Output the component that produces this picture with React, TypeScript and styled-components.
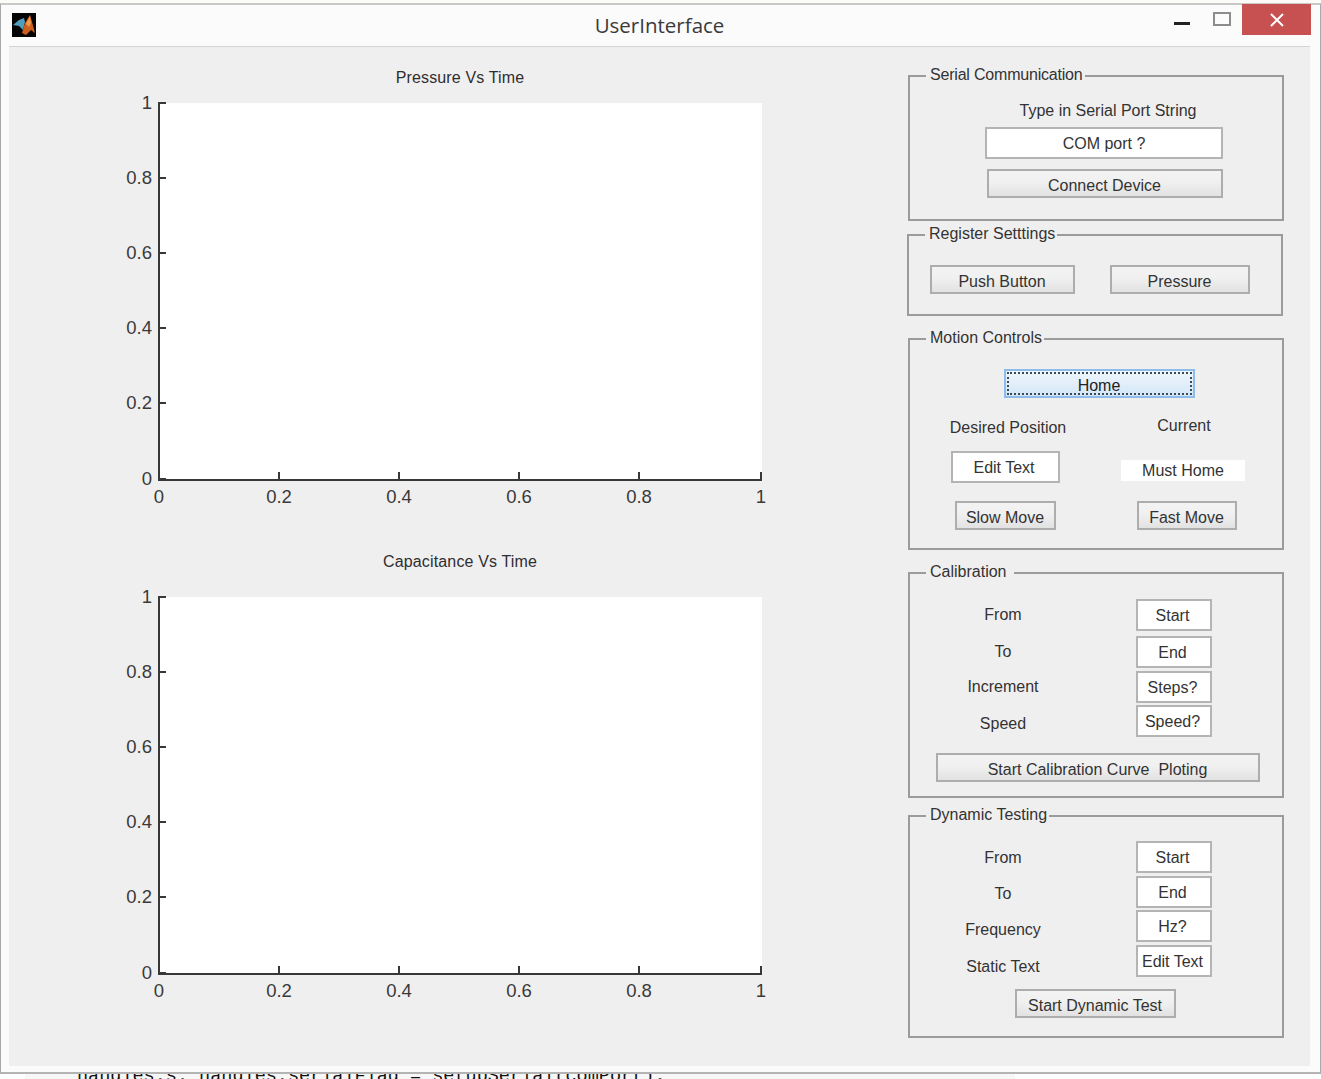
import React from "react";
import styled, { createGlobalStyle, css } from "styled-components";

const Global = createGlobalStyle`
  html, body { margin: 0; padding: 0; background: #ffffff; height: 1079px; overflow: hidden; }
  body { font-family: "Liberation Sans", Arial, sans-serif; }
  * { box-sizing: border-box; }
`;

type Place = { $top?: number; $left?: number; $w?: number; $h?: number };

const placed = css<Place>`
  margin-top: ${(p) => p.$top ?? 0}px;
  margin-left: ${(p) => p.$left ?? 0}px;
  ${(p) => (p.$w !== undefined ? `width: ${p.$w}px;` : "")}
  ${(p) => (p.$h !== undefined ? `height: ${p.$h}px;` : "")}
`;

const Page = styled.div`
  width: 1321px;
  height: 1079px;
  overflow: hidden;
`;

const TopGap = styled.div`
  height: 3px;
  background: #fdfbf8;
`;

const Window = styled.div`
  width: 1321px;
  height: 1071px;
  background: #fbfbfb;
  border: 1px solid #a9a9a9;
  border-top: 2px solid #c9c9c9;
  border-bottom: 2px solid #b4b4b4;
  display: flex;
  flex-direction: column;
`;

const TitleBar = styled.header`
  height: 41px;
  flex: none;
  display: flex;
  align-items: flex-start;
  position: relative;
  padding-left: 11px;
`;

const Logo = styled.svg`
  width: 24px;
  height: 24px;
  margin-top: 8px;
  display: block;
`;

const TitleText = styled.div`
  position: absolute;
  left: 0;
  right: 0;
  top: 6px;
  padding-right: 2px;
  text-align: center;
  font-family: "Open Sans", "Noto Sans", sans-serif;
  font-size: 20.5px;
  line-height: 28px;
  color: #3a3a3a;
`;

const WindowControls = styled.div`
  margin-left: auto;
  margin-right: 9px;
  display: flex;
  align-items: flex-start;
`;

const Minimize = styled.div`
  width: 16px;
  height: 3px;
  background: #222222;
  margin-top: 17px;
`;

const Maximize = styled.div`
  width: 18px;
  height: 14px;
  border: 2px solid #8c8c8c;
  margin-top: 7px;
  margin-left: 23px;
`;

const Close = styled.div`
  width: 69px;
  height: 31px;
  background: #c75050;
  margin-left: 11px;
  margin-top: -1px;
  display: flex;
  align-items: center;
  justify-content: center;
`;

const Client = styled.main`
  height: 1020px;
  width: 1301px;
  margin-left: 8px;
  flex: none;
  background: #f0eff0;
  border-top: 1px solid #d4d4d4;
  display: flex;
`;

const PlotColumn = styled.section`
  width: 899px;
  flex: none;
  padding-left: 91px;
  padding-top: 21px;
`;

const PlotTitle = styled.h2<{ $top?: number; $gap: number }>`
  margin: ${(p) => p.$top ?? 0}px 0 ${(p) => p.$gap}px;
  width: 720px;
  height: 20px;
  text-align: center;
  font-size: 16px;
  line-height: 20px;
  letter-spacing: 0.15px;
  font-weight: normal;
  color: #2e2e2e;
`;

const PlotSvg = styled.svg`
  display: block;
  width: 720px;
  height: 420px;
`;

const PanelColumn = styled.aside`
  width: 380px;
  flex: none;
  padding-top: 18px;
  display: flex;
  flex-direction: column;
`;

const Panel = styled.fieldset<{ $top?: number; $nudge?: number; $height: number }>`
  margin: ${(p) => p.$top ?? 0}px 0 0 ${(p) => p.$nudge ?? 0}px;
  padding: 0;
  width: 376px;
  height: ${(p) => p.$height}px;
  min-width: 0;
  border: 2px solid #9b9b9b;
`;

const PanelLegend = styled.legend<{ $tail?: number; $track?: number }>`
  margin-left: 16px;
  padding: 1px ${(p) => p.$tail ?? 2}px 3px 4px;
  font-size: 16px;
  line-height: 18px;
  letter-spacing: ${(p) => p.$track ?? 0}px;
  color: #333333;
`;

const Row = styled.div<{ $top?: number }>`
  display: flex;
  align-items: flex-start;
  margin-top: ${(p) => p.$top ?? 0}px;
`;

const Caption = styled.div<Place>`
  ${placed}
  flex: none;
  height: 20px;
  padding-top: 1px;
  line-height: 20px;
  font-size: 16px;
  text-align: center;
  white-space: pre;
  color: #333333;
`;

const EditBox = styled.div<Place & { $inset?: number }>`
  ${placed}
  flex: none;
  display: flex;
  align-items: center;
  justify-content: center;
  padding: 2px ${(p) => p.$inset ?? 3}px 0 0;
  background: #ffffff;
  border: 2px solid #b4b4b4;
  font-size: 16px;
  color: #333333;
`;

const ReadOut = styled.div<Place>`
  ${placed}
  flex: none;
  display: flex;
  align-items: center;
  justify-content: center;
  background: #ffffff;
  font-size: 16px;
  color: #333333;
`;

const PushButton = styled.div<Place>`
  ${placed}
  flex: none;
  display: flex;
  align-items: center;
  justify-content: center;
  padding: 4px 1px 0 0;
  background: linear-gradient(#f3f3f3, #f0f0f0 45%, #e2e2e2);
  border: 2px solid #adadad;
  font-size: 16px;
  white-space: pre;
  color: #333333;
`;

const FocusButton = styled(PushButton)`
  background: linear-gradient(#eef6fd, #e2effa 50%, #d2e6f7);
  border-color: #8dbce8;
  outline: 2px dotted #3d4a55;
  outline-offset: -5px;
  color: #222222;
`;

const CodeStrip = styled.div`
  height: 6px;
  margin-left: 25px;
  width: 990px;
  background: #f7f7f7;
  overflow: hidden;
  position: relative;
`;

const CodeLine = styled.pre`
  margin: -6px 0 0 52px;
  font-family: "Liberation Mono", monospace;
  font-size: 18.5px;
  line-height: 18px;
  color: #111111;
`;

const ticks = [0, 0.2, 0.4, 0.6, 0.8, 1];

function Plot() {
  const x0 = 59;
  const y0 = 13;
  const h = 376;
  const yb = y0 + h;
  // The reference's ticks fall on whole pixels: 120 apart across, 75 apart up.
  const xAt = (t: number) => (t === 1 ? x0 + 602 : x0 + Math.round(t * 600));
  const yAt = (t: number) => (t === 0 ? yb : yb - 1 - Math.round(t * 375));
  return (
    <PlotSvg viewBox="0 0 720 420">
      <rect x={x0} y={y0} width={603} height={h} fill="#ffffff" />
      <g stroke="#383838" strokeWidth="2" fill="none">
        <path d={`M${x0} ${y0 - 1}V${yb + 1}H${x0 + 603}`} />
        {ticks.map((t) => (
          <path key={`y${t}`} d={`M${x0} ${yAt(t)}h7`} />
        ))}
        {ticks.map((t) => (
          <path key={`x${t}`} d={`M${xAt(t)} ${yb}v-7`} />
        ))}
      </g>
      <g fontFamily="'Liberation Sans', Arial, sans-serif" fontSize="18.5" fill="#3a3a3a">
        {ticks.map((t) => (
          <text key={`yl${t}`} x={x0 - 7} y={yAt(t) + 6} textAnchor="end">
            {String(t)}
          </text>
        ))}
        {ticks.map((t) => (
          <text key={`xl${t}`} x={xAt(t)} y={yb + 24} textAnchor="middle">
            {String(t)}
          </text>
        ))}
      </g>
    </PlotSvg>
  );
}

function ParamRow({
  top,
  label,
  labelTop,
  value,
}: {
  top: number;
  label: string;
  labelTop: number;
  value: string;
}) {
  return (
    <Row $top={top}>
      <Caption $w={186} $top={labelTop}>
        {label}
      </Caption>
      <EditBox $left={40} $w={76} $h={32}>
        {value}
      </EditBox>
    </Row>
  );
}

export default function App() {
  return (
    <Page>
      <Global />
      <TopGap />
      <Window>
        <TitleBar>
          <Logo viewBox="0 0 24 24">
            <rect width="24" height="24" fill="#050505" />
            <path d="M1 12 L7 7 L12 5 L13 9 L11 17 L7 13 Z" fill="#4f9fbd" />
            <path d="M10 20 L13 10 L18 2 L20 9 L23 20 L19 17 L14 22 Z" fill="#cf5f1d" />
            <path d="M14 11 L18 3 L19 10 L17 14 Z" fill="#ee9a4a" />
          </Logo>
          <TitleText>UserInterface</TitleText>
          <WindowControls>
            <Minimize />
            <Maximize />
            <Close>
              <svg width="14" height="14" viewBox="0 0 14 14">
                <path d="M1 1L13 13M13 1L1 13" stroke="#ffffff" strokeWidth="2" fill="none" />
              </svg>
            </Close>
          </WindowControls>
        </TitleBar>
        <Client>
          <PlotColumn>
            <PlotTitle $gap={2}>Pressure Vs Time</PlotTitle>
            <Plot />
            <PlotTitle $top={42} $gap={12}>
              Capacitance Vs Time
            </PlotTitle>
            <Plot />
          </PlotColumn>
          <PanelColumn>
            <Panel $height={156}>
              <PanelLegend $track={-0.2}>Serial Communication</PanelLegend>
              <Caption $top={13} $left={48} $w={300}>
                Type in Serial Port String
              </Caption>
              <EditBox $top={7} $left={75} $w={238} $h={32} $inset={0}>
                COM port ?
              </EditBox>
              <PushButton $top={10} $left={77} $w={236} $h={29}>
                Connect Device
              </PushButton>
            </Panel>

            <Panel $top={3} $nudge={-1} $height={92}>
              <PanelLegend>Register Setttings</PanelLegend>
              <Row $top={19}>
                <PushButton $left={21} $w={145} $h={29}>
                  Push Button
                </PushButton>
                <PushButton $left={35} $w={140} $h={29}>
                  Pressure
                </PushButton>
              </Row>
            </Panel>

            <Panel $top={12} $height={222}>
              <PanelLegend>Motion Controls</PanelLegend>
              <FocusButton $top={19} $left={94} $w={191} $h={29}>
                Home
              </FocusButton>
              <Row $top={17}>
                <Caption $top={2} $w={196}>
                  Desired Position
                </Caption>
                <Caption $left={28} $w={100}>
                  Current
                </Caption>
              </Row>
              <Row $top={14}>
                <EditBox $left={41} $w={109} $h={32}>
                  Edit Text
                </EditBox>
                <ReadOut $top={9} $left={61} $w={124} $h={21}>
                  Must Home
                </ReadOut>
              </Row>
              <Row $top={18}>
                <PushButton $left={45} $w={101} $h={29}>
                  Slow Move
                </PushButton>
                <PushButton $left={81} $w={100} $h={29}>
                  Fast Move
                </PushButton>
              </Row>
            </Panel>

            <Panel $top={12} $height={236}>
              <PanelLegend $tail={8}>Calibration</PanelLegend>
              <ParamRow top={15} label="From" labelTop={5} value="Start" />
              <ParamRow top={5} label="To" labelTop={5} value="End" />
              <ParamRow top={3} label="Increment" labelTop={5} value="Steps?" />
              <ParamRow top={2} label="Speed" labelTop={8} value="Speed?" />
              <PushButton $top={16} $left={26} $w={324} $h={29}>
                {"Start Calibration Curve  Ploting"}
              </PushButton>
            </Panel>

            <Panel $top={7} $height={233}>
              <PanelLegend>Dynamic Testing</PanelLegend>
              <ParamRow top={14} label="From" labelTop={6} value="Start" />
              <ParamRow top={3} label="To" labelTop={7} value="End" />
              <ParamRow top={2} label="Frequency" labelTop={9} value="Hz?" />
              <ParamRow top={3} label="Static Text" labelTop={11} value="Edit Text" />
              <PushButton $top={12} $left={105} $w={161} $h={29}>
                Start Dynamic Test
              </PushButton>
            </Panel>
          </PanelColumn>
        </Client>
      </Window>
      <CodeStrip>
        <CodeLine>handles.s. handles.serialFlag = setupSerial(comPort);</CodeLine>
      </CodeStrip>
    </Page>
  );
}
